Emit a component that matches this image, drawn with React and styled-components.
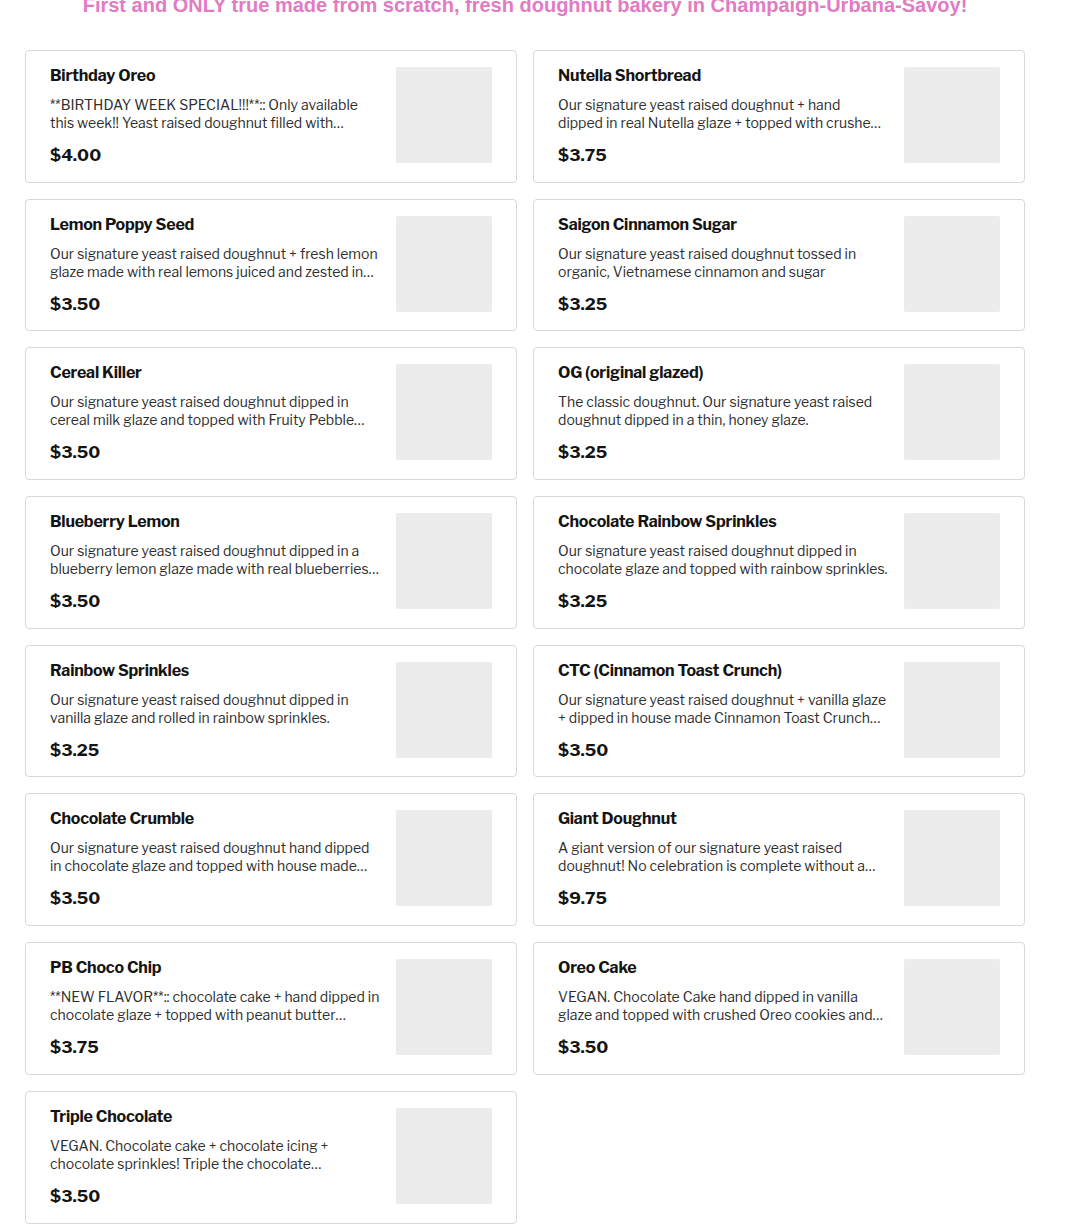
import React from 'react';
import styled, { createGlobalStyle } from 'styled-components';

const GlobalStyle = createGlobalStyle`
  body {
    margin: 0;
    background: #ffffff;
    font-family: "Libre Franklin", Inter, "Liberation Sans", sans-serif;
    color: #191919;
  }
`;

const Page = styled.div`
  width: 1000px;
  margin-left: 25px;
  margin-top: -10px;
`;

const Tagline = styled.h2`
  margin: 0 0 30px;
  text-align: center;
  font-family: "Liberation Sans Narrow", "Liberation Sans", sans-serif;
  font-stretch: condensed;
  font-size: 20px;
  line-height: 30px;
  font-weight: 700;
  color: #e27ac4;
`;

const Grid = styled.div`
  display: grid;
  grid-template-columns: 492px 492px;
  column-gap: 16px;
  row-gap: 16px;
`;

const Card = styled.div`
  box-sizing: border-box;
  height: 132.7px;
  display: flex;
  gap: 16px;
  padding: 17px 24px 16px;
  border: 1px solid #d8d8d8;
  border-radius: 4px;
  background: #fff;
`;

const Info = styled.div`
  flex: 1;
  min-width: 0;
  display: flex;
  flex-direction: column;
`;

const Name = styled.div`
  font-size: 16px;
  line-height: 16px;
  font-weight: 700;
  color: #141414;
  letter-spacing: -0.2px;
`;

const Description = styled.div`
  margin-top: 12px;
  font-size: 14px;
  line-height: 18px;
  color: #2e2e2e;
  display: -webkit-box;
  -webkit-line-clamp: 2;
  -webkit-box-orient: vertical;
  overflow: hidden;
`;

const Price = styled.div`
  margin-top: 13px;
  font-size: 17px;
  line-height: 20px;
  font-weight: 700;
  color: #141414;
`;

const Thumb = styled.div`
  flex: none;
  margin-top: -1px;
  width: 96px;
  height: 96px;
  background: #ececec;
  border-radius: 2px;
`;

const items = [
  ['Birthday Oreo', '**BIRTHDAY WEEK SPECIAL!!!**:: Only available this week!! Yeast raised doughnut filled with…', '$4.00'],
  ['Nutella Shortbread', 'Our signature yeast raised doughnut + hand dipped in real Nutella glaze + topped with crushe…', '$3.75'],
  ['Lemon Poppy Seed', 'Our signature yeast raised doughnut + fresh lemon glaze made with real lemons juiced and zested in…', '$3.50'],
  ['Saigon Cinnamon Sugar', 'Our signature yeast raised doughnut tossed in organic, Vietnamese cinnamon and sugar', '$3.25'],
  ['Cereal Killer', 'Our signature yeast raised doughnut dipped in cereal milk glaze and topped with Fruity Pebble…', '$3.50'],
  ['OG (original glazed)', 'The classic doughnut. Our signature yeast raised doughnut dipped in a thin, honey glaze.', '$3.25'],
  ['Blueberry Lemon', 'Our signature yeast raised doughnut dipped in a blueberry lemon glaze made with real blueberries…', '$3.50'],
  ['Chocolate Rainbow Sprinkles', 'Our signature yeast raised doughnut dipped in chocolate glaze and topped with rainbow sprinkles.', '$3.25'],
  ['Rainbow Sprinkles', 'Our signature yeast raised doughnut dipped in vanilla glaze and rolled in rainbow sprinkles.', '$3.25'],
  ['CTC (Cinnamon Toast Crunch)', 'Our signature yeast raised doughnut + vanilla glaze + dipped in house made Cinnamon Toast Crunch…', '$3.50'],
  ['Chocolate Crumble', 'Our signature yeast raised doughnut hand dipped in chocolate glaze and topped with house made…', '$3.50'],
  ['Giant Doughnut', 'A giant version of our signature yeast raised doughnut! No celebration is complete without a…', '$9.75'],
  ['PB Choco Chip', '**NEW FLAVOR**:: chocolate cake + hand dipped in chocolate glaze + topped with peanut butter…', '$3.75'],
  ['Oreo Cake', 'VEGAN. Chocolate Cake hand dipped in vanilla glaze and topped with crushed Oreo cookies and…', '$3.50'],
  ['Triple Chocolate', 'VEGAN. Chocolate cake + chocolate icing + chocolate sprinkles! Triple the chocolate…', '$3.50'],
];

const App = () => (
  <>
    <GlobalStyle />
    <Page>
      <Tagline>First and ONLY true made from scratch, fresh doughnut bakery in Champaign-Urbana-Savoy!</Tagline>
      <Grid>
        {items.map(([name, desc, price]) => (
          <Card key={name}>
            <Info>
              <Name>{name}</Name>
              <Description>{desc}</Description>
              <Price>{price}</Price>
            </Info>
            <Thumb />
          </Card>
        ))}
      </Grid>
    </Page>
  </>
);

export default App;
